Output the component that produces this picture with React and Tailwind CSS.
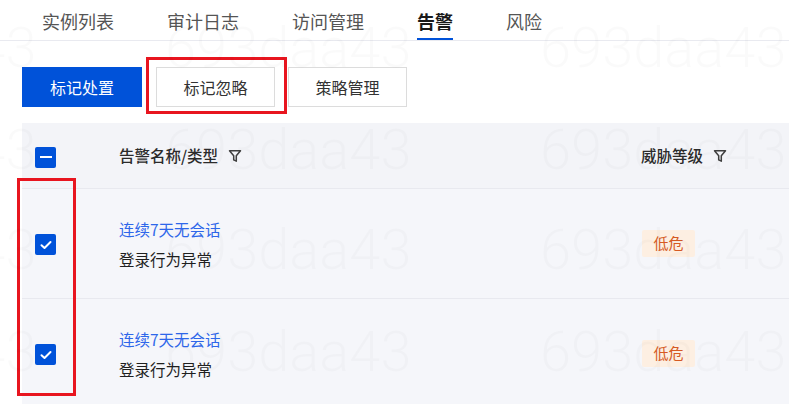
import React from "react";

const FONT = { fontFamily: '"Noto Sans CJK SC", "Noto Sans", sans-serif' };

const tabs = ["实例列表", "审计日志", "访问管理", "告警", "风险"];

const rows = [
  { title: "连续7天无会话", type: "登录行为异常", level: "低危" },
  { title: "连续7天无会话", type: "登录行为异常", level: "低危" },
];

function FilterIcon() {
  return (
    <svg width="14" height="14" viewBox="0 0 14 14" fill="none" className="ml-[10px]">
      <path
        d="M1.5 1.8h11l-4.2 5v5.4l-2.6-1.3v-4.1z"
        stroke="#3f3f3f"
        strokeWidth="1.5"
        strokeLinejoin="round"
      />
    </svg>
  );
}

function CheckBox({ indeterminate }) {
  return (
    <div className="flex h-[21px] w-[21px] items-center justify-center rounded-[2px] bg-[#0052d9]">
      {indeterminate ? (
        <div className="h-[2px] w-[12px] bg-white" />
      ) : (
        <svg width="12" height="10" viewBox="0 0 12 10" fill="none">
          <path d="M1.5 5.2l3 2.8 6-6" stroke="white" strokeWidth="2" strokeLinecap="round" strokeLinejoin="round" />
        </svg>
      )}
    </div>
  );
}

function Watermarks() {
  const tops = [20, 122, 222, 324];
  const lefts = [-210, 165, 540];
  return (
    <div className="pointer-events-none absolute inset-0 overflow-hidden">
      {tops.map((t) =>
        lefts.map((l) => (
          <div
            key={`${t}-${l}`}
            className="absolute text-[56px] font-light leading-none text-black/[0.018]"
            style={{ top: t, left: l, fontFamily: "Roboto, sans-serif" }}
          >
            693daa43
          </div>
        ))
      )}
    </div>
  );
}

export default function App() {
  return (
    <div className="relative h-[404px] w-[789px] overflow-hidden bg-white" style={FONT}>
      {/* tabs */}
      <div className="flex h-[41px] gap-[53px] border-b border-[#e9eaf0] pl-[42px]">
        {tabs.map((t) => (
          <div
            key={t}
            className={
              t === "告警"
                ? "relative flex items-center pt-[2px] text-[18px] font-bold text-[#1a1a1a]"
                : "relative flex items-center pt-[2px] text-[18px] text-[#555]"
            }
          >
            {t}
            {t === "告警" && <div className="absolute bottom-[0px] left-0 right-0 h-[2px] bg-[#0052d9]" />}
          </div>
        ))}
      </div>

      {/* actions */}
      <div className="mt-[26px] flex pl-[22px]">
        <button className="h-[40px] w-[120px] bg-[#0052d9] text-[16px] text-white">标记处置</button>
        <div className="relative ml-[14px]">
          <button className="h-[40px] w-[119px] border border-[#dcdcdc] bg-white text-[16px] text-[#333]">
            标记忽略
          </button>
          <div className="absolute -left-[10px] -right-[12px] -top-[10px] -bottom-[7px] border-[3px] border-[#e8151f]" />
        </div>
        <button className="ml-[13px] h-[40px] w-[119px] border border-[#dcdcdc] bg-white text-[16px] text-[#333]">
          策略管理
        </button>
      </div>

      {/* table */}
      <div className="ml-[22px] mt-[16px] bg-[#f5f6fa] text-[15.5px]">
        <div className="flex h-[65px] items-center bg-[#f3f4f8]">
          <div className="w-[97px] pl-[13px] pt-[3px]">
            <CheckBox indeterminate />
          </div>
          <div className="flex w-[522px] items-center font-medium text-[#2b2b2b]">
            告警名称/类型
            <FilterIcon />
          </div>
          <div className="flex items-center font-medium text-[#2b2b2b]">
            威胁等级
            <FilterIcon />
          </div>
        </div>
        {rows.map((r, i) => (
          <div key={i} className="flex h-[110px] items-center border-t border-[#e8e9ef]">
            <div className="w-[97px] pl-[13px] pt-[2px]">
              <CheckBox />
            </div>
            <div className="flex w-[523px] flex-col gap-[6px] leading-[24px]">
              <div className="text-[#2e67ea]">{r.title}</div>
              <div className="text-[#1f1f1f]">{r.type}</div>
            </div>
            <div className="flex h-[27px] w-[53px] items-center justify-center rounded-[2px] bg-[#fdefe2] text-[15px] text-[#d65a22]">
              {r.level}
            </div>
          </div>
        ))}
      </div>

      {/* highlight around row checkboxes */}
      <div className="pointer-events-none absolute left-[17px] top-[178px] h-[218px] w-[59px] border-[3px] border-[#e8151f]" />

      <Watermarks />
    </div>
  );
}
